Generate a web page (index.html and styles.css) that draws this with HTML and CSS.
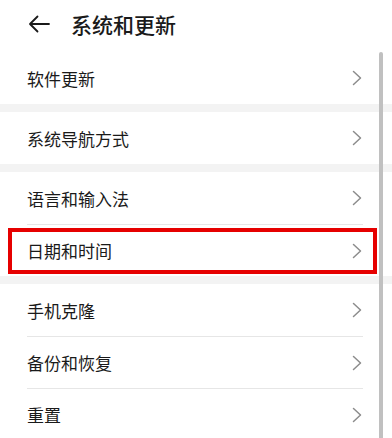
FILE: index.html
```html
<!DOCTYPE html>
<html lang="zh-CN">
<head>
<meta charset="utf-8">
<link rel="stylesheet" href="styles.css">
</head>
<body>
<div class="screen">
  <header class="topbar">
    <svg class="back" width="22" height="18" viewBox="0 0 22 18"><path d="M21 9H2.5M9.5 1.5L2 9l7.5 7.5" fill="none" stroke="#1a1a1a" stroke-width="1.8" stroke-linecap="round" stroke-linejoin="round"/></svg>
    <h1 class="title">系统和更新</h1>
  </header>
  <div class="list">
    <section class="group">
      <div class="row"><span class="label">软件更新</span><svg class="chev" width="10" height="16" viewBox="0 0 10 16"><path d="M1.5 1.5L8.5 8l-7 6.5"/></svg></div>
    </section>
    <section class="group">
      <div class="row"><span class="label">系统导航方式</span><svg class="chev" width="10" height="16" viewBox="0 0 10 16"><path d="M1.5 1.5L8.5 8l-7 6.5"/></svg></div>
    </section>
    <section class="group">
      <div class="row"><span class="label">语言和输入法</span><svg class="chev" width="10" height="16" viewBox="0 0 10 16"><path d="M1.5 1.5L8.5 8l-7 6.5"/></svg></div>
      <div class="row highlight"><span class="label">日期和时间</span><svg class="chev" width="10" height="16" viewBox="0 0 10 16"><path d="M1.5 1.5L8.5 8l-7 6.5"/></svg></div>
    </section>
    <section class="group">
      <div class="row"><span class="label">手机克隆</span><svg class="chev" width="10" height="16" viewBox="0 0 10 16"><path d="M1.5 1.5L8.5 8l-7 6.5"/></svg></div>
      <div class="row"><span class="label">备份和恢复</span><svg class="chev" width="10" height="16" viewBox="0 0 10 16"><path d="M1.5 1.5L8.5 8l-7 6.5"/></svg></div>
      <div class="row"><span class="label">重置</span><svg class="chev" width="10" height="16" viewBox="0 0 10 16"><path d="M1.5 1.5L8.5 8l-7 6.5"/></svg></div>
    </section>
  </div>
  <div class="scrollbar"></div>
</div>
</body>
</html>
```

FILE: styles.css
```css
html, body {
  margin: 0;
  padding: 0;
  background: #ffffff;
}
body {
  font-family: "Noto Sans CJK SC", "Noto Sans", sans-serif;
  color: #1a1a1a;
  overflow: hidden;
}
.screen {
  position: relative;
  width: 392px;
  height: 438px;
  overflow: hidden;
  background: #ffffff;
}
.topbar {
  height: 52px;
  display: flex;
  align-items: center;
  padding-left: 28px;
  padding-bottom: 4px;
  box-sizing: border-box;
}
.back {
  display: block;
  margin-right: 21px;
}
.title {
  margin: 0;
  font-size: 21px;
  font-weight: 500;
  line-height: 1;
  color: #1a1a1a;
}
.list {
  display: flex;
  flex-direction: column;
  gap: 8px;
  background: #f3f3f3;
}
.group {
  background: #ffffff;
  padding: 0 29px 0 27px;
}
.row {
  position: relative;
  height: 52px;
  display: flex;
  align-items: center;
  justify-content: space-between;
  border-top: 1px solid #e6e6e6;
  box-sizing: border-box;
}
.row:first-child {
  border-top: none;
}
.label {
  font-size: 17px;
  line-height: 1;
  color: #1a1a1a;
}
.chev {
  display: block;
  margin-right: 1px;
}
.chev path {
  fill: none;
  stroke: #8c8c8c;
  stroke-width: 1.5;
  stroke-linecap: round;
  stroke-linejoin: round;
}
.highlight::after {
  content: "";
  position: absolute;
  left: -19px;
  right: -14px;
  top: 3px;
  bottom: 2px;
  border: 4px solid #e60000;
}
.scrollbar {
  position: absolute;
  left: 379px;
  top: 52px;
  width: 4px;
  height: 400px;
  border-radius: 2px;
  background: #c0c0c0;
}
```
